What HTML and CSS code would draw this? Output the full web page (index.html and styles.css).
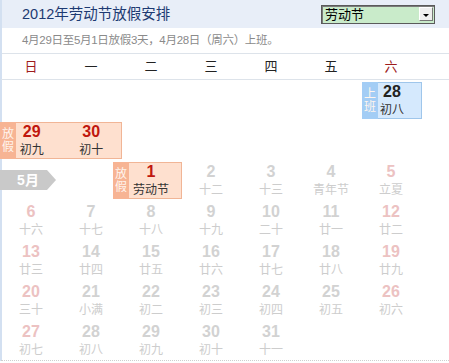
FILE: index.html
```html
<!DOCTYPE html>
<html lang="zh-CN">
<head>
<meta charset="utf-8">
<title>2012年劳动节放假安排</title>
<link rel="stylesheet" href="styles.css">
</head>
<body>
<div class="cal">
  <div class="head">
    <h1 class="title">2012年劳动节放假安排</h1>
    <div class="sel"><span class="sel-text">劳动节</span><span class="sel-btn"><span class="tri"></span></span></div>
  </div>
  <div class="note">4月29日至5月1日放假3天，4月28日（周六）上班。</div>
  <div class="weekdays">
    <div class="wk red">日</div><div class="wk">一</div><div class="wk">二</div><div class="wk">三</div><div class="wk">四</div><div class="wk">五</div><div class="wk red">六</div>
  </div>
  <div class="grid">
    <div class="blk work c7">
      <span class="tag">上<br>班</span>
      <div class="d"><b>28</b><i>初八</i></div>
    </div>
    <div class="blk off c12">
      <span class="tag">放<br>假</span>
      <div class="d"><b>29</b><i>初九</i></div>
      <div class="d"><b>30</b><i>初十</i></div>
    </div>
    <div class="mon">5月</div>
    <div class="blk off c3">
      <span class="tag">放<br>假</span>
      <div class="d"><b>1</b><i>劳动节</i></div>
    </div>
    <div class="d"><b>2</b><i>十二</i></div>
    <div class="d"><b>3</b><i>十三</i></div>
    <div class="d"><b>4</b><i>青年节</i></div>
    <div class="d we"><b>5</b><i>立夏</i></div>
    <div class="d we"><b>6</b><i>十六</i></div>
    <div class="d"><b>7</b><i>十七</i></div>
    <div class="d"><b>8</b><i>十八</i></div>
    <div class="d"><b>9</b><i>十九</i></div>
    <div class="d"><b>10</b><i>二十</i></div>
    <div class="d"><b>11</b><i>廿一</i></div>
    <div class="d we"><b>12</b><i>廿二</i></div>
    <div class="d we"><b>13</b><i>廿三</i></div>
    <div class="d"><b>14</b><i>廿四</i></div>
    <div class="d"><b>15</b><i>廿五</i></div>
    <div class="d"><b>16</b><i>廿六</i></div>
    <div class="d"><b>17</b><i>廿七</i></div>
    <div class="d"><b>18</b><i>廿八</i></div>
    <div class="d we"><b>19</b><i>廿九</i></div>
    <div class="d we"><b>20</b><i>三十</i></div>
    <div class="d"><b>21</b><i>小满</i></div>
    <div class="d"><b>22</b><i>初二</i></div>
    <div class="d"><b>23</b><i>初三</i></div>
    <div class="d"><b>24</b><i>初四</i></div>
    <div class="d"><b>25</b><i>初五</i></div>
    <div class="d we"><b>26</b><i>初六</i></div>
    <div class="d we"><b>27</b><i>初七</i></div>
    <div class="d"><b>28</b><i>初八</i></div>
    <div class="d"><b>29</b><i>初九</i></div>
    <div class="d"><b>30</b><i>初十</i></div>
    <div class="d"><b>31</b><i>十一</i></div>
  </div>
</div>
</body>
</html>
```

FILE: styles.css
```css
html, body {
  margin: 0;
  padding: 0;
  background: #fff;
}
body {
  font-family: "Liberation Sans", "Noto Sans CJK SC", sans-serif;
}
.cal {
  border-left: 2px solid #d3e0f1;
}
.head {
  height: 28px;
  background: #e8eef8;
  display: flex;
  align-items: center;
  justify-content: space-between;
  padding: 0 14px 0 20px;
}
.title {
  margin: 0;
  font-size: 14.5px;
  font-weight: normal;
  color: #1d3a72;
  line-height: 28px;
}
.sel {
  box-sizing: border-box;
  width: 114px;
  height: 19px;
  background: #c9ebca;
  border: 1px solid #5a5a5a;
  box-shadow: inset 1px 1px 0 #7a7a7a;
  display: flex;
  align-items: center;
  justify-content: space-between;
  padding: 0 1px 0 3px;
}
.sel-text {
  font-size: 13px;
  line-height: 15px;
  color: #000;
}
.sel-btn {
  box-sizing: border-box;
  width: 14px;
  height: 14px;
  background: #efefef;
  border: 1px solid;
  border-color: #fff #777 #777 #fff;
  display: flex;
  align-items: center;
  justify-content: center;
}
.tri {
  width: 0;
  height: 0;
  border-left: 3px solid transparent;
  border-right: 3px solid transparent;
  border-top: 3px solid #000;
  margin-top: 2px;
}
.note {
  height: 25px;
  line-height: 25px;
  padding-left: 20px;
  font-size: 11.5px;
  letter-spacing: -0.3px;
  color: #8a8a8a;
  border-bottom: 1px solid #dde3ea;
}
.weekdays {
  display: grid;
  grid-template-columns: repeat(7, 60px);
  height: 25px;
  margin-left: -1px;
  border-bottom: 1px solid #dde3ea;
}
.wk {
  text-align: center;
  font-size: 13px;
  line-height: 25px;
  color: #222;
}
.wk.red {
  color: #9e1c1c;
}
.grid {
  display: grid;
  grid-template-columns: repeat(7, 60px);
  grid-auto-rows: 40px;
  margin-left: -1px;
  border-bottom: 1px dotted #cfcfcf;
}
.d {
  text-align: center;
  padding-top: 3px;
}
.d b {
  display: block;
  font-size: 16px;
  line-height: 18px;
  color: #d2d2d2;
}
.d i {
  display: block;
  font-style: normal;
  font-size: 12px;
  line-height: 18px;
  color: #cdcdcd;
}
.d.we b {
  color: #ecc2c2;
}
.blk {
  position: relative;
  display: grid;
  grid-auto-flow: column;
  grid-auto-columns: 1fr;
  margin: 2px 0 1px;
  border: 1px solid #f1b596;
  background: #fee0cf;
}
.blk .d {
  padding-top: 0;
}
.blk .d b {
  color: #c0170e;
}
.blk .d i {
  color: #333;
}
.tag {
  position: absolute;
  left: -1px;
  top: -1px;
  bottom: -1px;
  width: 16px;
  background: #f7b494;
  color: #fff5ee;
  font-size: 12px;
  line-height: 13px;
  display: flex;
  align-items: center;
  justify-content: center;
  text-align: center;
}
.blk.work {
  border-color: #9fc6eb;
  background: #d5e9fd;
  margin-left: 1px;
  margin-right: -1px;
}
.blk.work .tag {
  background: #a3cdf5;
}
.blk.work .d b {
  color: #222;
}
.c7 {
  grid-column: 7;
}
.c12 {
  grid-column: 1 / span 2;
  margin-left: -1px;
  margin-right: -1px;
  padding-left: 1px;
}
.c3 {
  grid-column: 3;
  margin-left: -8px;
  margin-right: -1px;
  padding-left: 7px;
}
.mon {
  grid-column: 1;
  align-self: center;
  margin-left: -1px;
  width: 56px;
  height: 20px;
  line-height: 20px;
  text-align: center;
  background: #c9c9c9;
  color: #fff;
  font-size: 14px;
  font-weight: bold;
  clip-path: polygon(0 0, 47px 0, 56px 50%, 47px 100%, 0 100%);
}
```
